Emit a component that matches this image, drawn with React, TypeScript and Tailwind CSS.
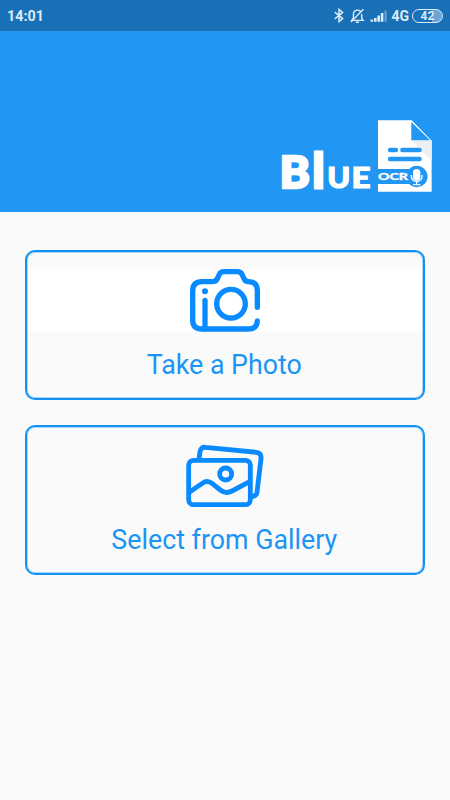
import type { ReactNode } from 'react'

function StatusBar() {
  return (
    <div className="flex h-[31px] items-center justify-between bg-[#1a70b7] pr-[7px] pl-[7px] text-[#dcebf8]">
      <span className="mt-px text-[14.3px] leading-none font-bold">14:01</span>
      <div className="flex items-center">
        <svg width="10" height="15" viewBox="0 0 10 15" fill="none" stroke="currentColor" strokeWidth="1.5">
          <path d="M0.8 4.2 8.6 10.6 5 13.6V1.4L8.6 4.4 0.8 10.8" />
        </svg>
        <svg className="ml-[6px]" width="15" height="16" viewBox="0 0 15 16" fill="none" stroke="currentColor" strokeWidth="1.4">
          <path d="M11.2 4.2C10.4 2.7 9.1 2.1 7.5 2.1 5 2.1 3.4 4 3.4 6.3V10.2L1.8 12.4H13.2L11.7 10.3V6" />
          <path d="M1 14 13.4 1.2M5.8 14.2H9" />
        </svg>
        <svg className="ml-[5px]" width="18" height="14" viewBox="0 0 18 14" fill="currentColor">
          <path d="M0.5 10.5h2.6v2.2H0.5zM4 9h2.6v3.7H4zM7.4 6.5H10v6.2H7.4zM10.8 4h2.6v8.7h-2.6z" />
          <path d="M14.3 1.5h2.6v11.2h-2.6z" opacity="0.35" />
        </svg>
        <span className="mt-px ml-[3px] text-[14px] leading-none font-bold">4G</span>
        <div className="ml-[3px] flex h-[14px] w-[31px] items-center justify-center rounded-full border-[1.5px] border-[#dcebf8] bg-linear-to-r from-[#1a70b7] from-65% to-[#6ca4d4] to-65% text-[12px] leading-none font-bold">
          42
        </div>
      </div>
    </div>
  )
}

function Logo() {
  return (
    <svg width="164" height="94" viewBox="270 118 164 94" fontFamily="Lato, sans-serif" fill="#fff">
      <g fontWeight="900" stroke="#fff">
        <text x="279.8" y="187.5" fontSize="44" strokeWidth="2.6" textLength="30" lengthAdjust="spacingAndGlyphs">B</text>
        <text x="312.6" y="187.5" fontSize="47" strokeWidth="2.8">l</text>
        <text x="327.3" y="188" fontSize="29" strokeWidth="1.2" textLength="23" lengthAdjust="spacingAndGlyphs">U</text>
        <text x="351.5" y="188" fontSize="28.5" strokeWidth="1.2" textLength="19" lengthAdjust="spacingAndGlyphs">E</text>
      </g>
      <g transform="translate(370 110) scale(.33333)">
        <path d="M24 31H125L185 92V245H24Z" />
        <path d="M125 92H185V153Z" fill="#eceff2" />
        <path d="M124 36V91H180Z" fill="#2196f3" />
        <path d="M60 120H78M97 120H149M60 147H149" stroke="#2196f3" strokeWidth="13" strokeLinecap="round" />
        <path d="M24 177H118A32 32 0 1 1 118 222H24Z" fill="#2196f3" />
        <rect x="129" y="177" width="22" height="35" rx="11" />
        <path d="M124 195v4a16 16 0 0 0 32 0v-4M140 214v9M129 224h22" fill="none" stroke="#fff" strokeWidth="4" />
      </g>
      <text x="378" y="180.3" fontSize="10" fontWeight="900" stroke="#fff" strokeWidth="0.3" textLength="30" lengthAdjust="spacingAndGlyphs">OCR</text>
    </svg>
  )
}

function CameraIcon() {
  return (
    <svg width="72" height="63" viewBox="27 28 216 189" fill="none" stroke="#0a8aff" strokeWidth="16" strokeLinecap="round" strokeLinejoin="round">
      <path d="M232 143V93Q232 66 205 66Q196 66 192 57L187 46Q183 36 172 36H132Q121 36 117 46L112 57Q108 66 98 66H66Q38 66 38 94V181Q38 208 66 208H206Q231 208 232 184" />
      <circle cx="153" cy="132" r="43" />
      <path d="M75 122V207" />
      <circle cx="75" cy="95" r="9" fill="#0a8aff" stroke="none" />
    </svg>
  )
}

function GalleryIcon() {
  return (
    <svg width="78" height="64" viewBox="18 26 234 192" fill="none" stroke="#0a8aff" strokeWidth="14.5" strokeLinecap="round" strokeLinejoin="round">
      <rect x="26" y="75" width="185" height="133" rx="15" />
      <path d="M57 72 60 49Q62 34 77 36L229 51Q245 53 243 70L231 171Q229 182 216 184" />
      <circle cx="137" cy="116" r="18" />
      <path d="M29 170 67 144Q82 133 97 145L121 164Q137 177 156 167L209 139" />
    </svg>
  )
}

function ActionButton({ icon, children }: { icon: ReactNode; children: ReactNode }) {
  return (
    <button className="flex h-[150px] w-full flex-col items-center rounded-[10px] border-2 border-[#1292f3] text-[26.8px] leading-[32px] text-[#1b95f3] inset-ring-1 inset-ring-[#1292f3]/35">
      {icon}
      <span className="pr-[1.5px]">{children}</span>
    </button>
  )
}

export default function App() {
  return (
    <div className="flex h-[800px] w-[450px] flex-col bg-[#fafafa] font-['Roboto',sans-serif]">
      <StatusBar />
      <header className="flex h-[181px] items-end justify-end bg-[#2196f3] pr-4">
        <Logo />
      </header>
      <main className="flex flex-col gap-[25px] px-[25px] pt-[38px]">
        <ActionButton
          icon={
            <span className="mt-[17px] mb-[17px] flex w-full justify-center px-px">
              <span className="flex w-full justify-center bg-white">
                <CameraIcon />
              </span>
            </span>
          }
        >
          Take a Photo
        </ActionButton>
        <ActionButton
          icon={
            <span className="mt-[17px] mb-4 flex w-full justify-center">
              <GalleryIcon />
            </span>
          }
        >
          Select from Gallery
        </ActionButton>
      </main>
    </div>
  )
}
